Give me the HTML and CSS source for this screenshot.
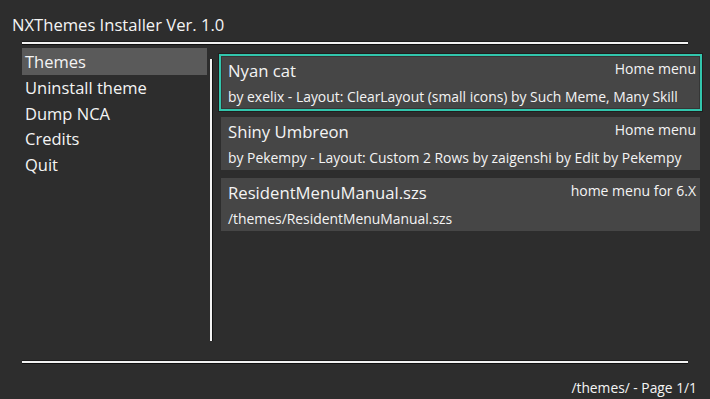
FILE: index.html
```html
<!DOCTYPE html>
<html lang="en">
<head>
    <meta charset="UTF-8">
    <title>NXThemes Installer</title>
    <link rel="stylesheet" href="styles.css">
</head>
<body>
    <div class="screen">
        <div class="header">NXThemes Installer Ver. 1.0</div>
        <div class="rule top-rule"></div>

        <div class="main">
            <ul class="menu">
                <li class="selected">Themes</li>
                <li>Uninstall theme</li>
                <li>Dump NCA</li>
                <li>Credits</li>
                <li>Quit</li>
            </ul>
            <div class="divider"></div>
            <div class="themes">
                <div class="card active">
                    <div class="card-top">
                        <span class="card-title">Nyan cat</span>
                        <span class="card-target">Home menu</span>
                    </div>
                    <div class="card-info">by exelix - Layout: ClearLayout (small icons) by Such Meme, Many Skill</div>
                </div>
                <div class="card">
                    <div class="card-top">
                        <span class="card-title">Shiny Umbreon</span>
                        <span class="card-target">Home menu</span>
                    </div>
                    <div class="card-info">by Pekempy - Layout: Custom 2 Rows by zaigenshi by Edit by Pekempy</div>
                </div>
                <div class="card">
                    <div class="card-top">
                        <span class="card-title">ResidentMenuManual.szs</span>
                        <span class="card-target">home menu for 6.X</span>
                    </div>
                    <div class="card-info">/themes/ResidentMenuManual.szs</div>
                </div>
            </div>
        </div>

        <div class="rule bottom-rule"></div>
        <div class="footer">/themes/ - Page 1/1</div>
    </div>
</body>
</html>
```

FILE: styles.css
```css
body {
    margin: 0;
    background-color: #2d2d2d;
    color: #f4f4f4;
    font-family: "Open Sans", "Noto Sans", sans-serif;
}
.screen {
    width: 710px;
    height: 399px;
    display: flex;
    flex-direction: column;
    overflow: hidden;
}
.header {
    height: 42px;
    padding-left: 12px;
    font-size: 16.6px;
    line-height: 49px;
}
.rule {
    height: 2px;
    margin: 0 22px;
    background-color: #f2f2f2;
    box-shadow: 0 1px 0 #111, 0 -1px 0 #1c1c1c;
}
.main {
    flex: 1;
    display: flex;
    padding: 4px 10px 0 22px;
}
.menu {
    list-style: none;
    margin: 0;
    padding: 0;
    width: 185px;
}
.menu li {
    height: 25.5px;
    line-height: 25.5px;
    padding-left: 3px;
    font-size: 16.5px;
}
.menu li.selected {
    height: 27px;
    line-height: 27px;
    background-color: #5a5a5a;
}
.divider {
    width: 2px;
    height: 282px;
    margin: 11px 0 0 3px;
    background-color: #f2f2f2;
    box-shadow: 1px 0 0 #111;
}
.themes {
    flex: 1;
    display: flex;
    flex-direction: column;
    gap: 8px;
    margin: 8px 0 0 9px;
}
.card {
    height: 53px;
    padding: 0 4px 0 7px;
    background-color: #464646;
}
.card.active {
    box-shadow: inset 0 0 0 1px #363636, 0 0 0 2px #32c6ad, 0 0 0 3px #1f1f1f;
}
.card-top {
    display: flex;
    justify-content: space-between;
    height: 29px;
}
.card-title {
    font-size: 16.7px;
    line-height: 30px;
}
.card-target {
    font-size: 14px;
    line-height: 25px;
}
.card-info {
    font-size: 13.9px;
    line-height: 23px;
}
.footer {
    height: 36px;
    padding-right: 13px;
    text-align: right;
    font-size: 13.8px;
    line-height: 50px;
}
```
